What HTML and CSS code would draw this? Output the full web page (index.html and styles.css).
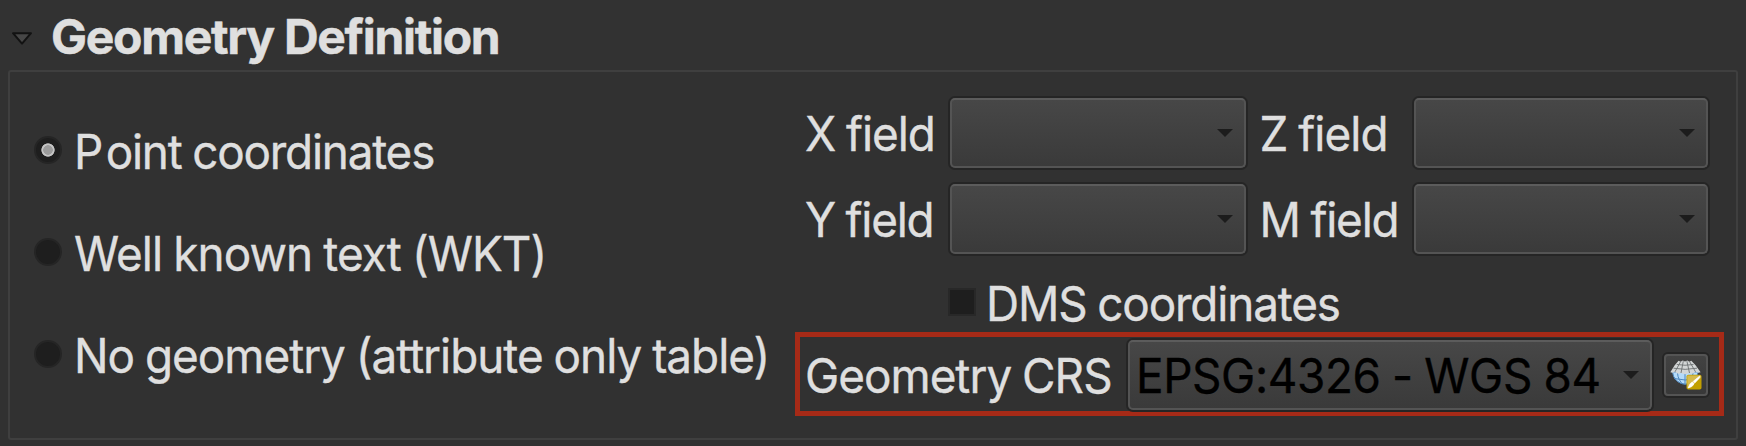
FILE: index.html
```
<!DOCTYPE html>
<html lang="en">
<head>
<meta charset="utf-8">
<title>Geometry Definition</title>
<link rel="stylesheet" href="styles.css">
</head>
<body>
<header class="header">
  <svg class="disclosure" width="24" height="18" viewBox="0 0 24 18"><path d="M3 3.2H21L12 13.6Z" fill="#464646" stroke="#121212" stroke-width="2" stroke-linejoin="round"/></svg>
  <h1 class="title">Geometry Definition</h1>
</header>
<main class="group">
  <div class="radios">
    <label class="radio"><span class="dot dot-on"></span><span class="text t-point"><span class="cap">P</span>oint coordinates</span></label>
    <label class="radio"><span class="dot"></span><span class="text t-wkt">Well known text (WKT)</span></label>
    <label class="radio"><span class="dot"></span><span class="text t-none">No geometry (attribute only table)</span></label>
  </div>
  <div class="fields">
    <div class="grid">
      <span class="text t-x">X field</span>
      <div class="combo"><svg class="arrow" width="16" height="8"><path d="M0 0H16L8 8Z"/></svg></div>
      <span class="text second t-z">Z field</span>
      <div class="combo"><svg class="arrow" width="16" height="8"><path d="M0 0H16L8 8Z"/></svg></div>
      <span class="text t-y">Y field</span>
      <div class="combo"><svg class="arrow" width="16" height="8"><path d="M0 0H16L8 8Z"/></svg></div>
      <span class="text second t-m">M field</span>
      <div class="combo"><svg class="arrow" width="16" height="8"><path d="M0 0H16L8 8Z"/></svg></div>
    </div>
    <label class="dms"><span class="check"></span><span class="text t-dms">DMS coordinates</span></label>
    <div class="crs">
      <span class="text crs-label t-crs">Geometry CRS</span>
      <div class="combo crs-combo"><span class="text t-epsg">EPSG:4326 - WGS 84</span><svg class="arrow" width="16" height="8"><path d="M0 0H16L8 8Z"/></svg></div>
      <div class="button">
        <svg width="32" height="30" viewBox="0 0 32 30">
          <path d="M2.500 12A12.800 13.300 0 0 0 28 12Z" fill="#b4dbfa" stroke="#4d86bd" stroke-width="1"/>
          <path d="M15 12V25M7.500 13Q8 20 13 24.500M23 13Q22.500 20 17.500 24.500M4 18.500Q15 21.500 27 18.500" fill="none" stroke="#4d86bd" stroke-width="1"/>
          <path d="M8.500 .8L10.500 1.800L12.800 .5L15 1.600L17.300 .5L19.500 1.800L21.300 .8L25.800 5.500L30.600 12.300Q28 13.300 25.500 11.800Q22.500 15 19.500 13Q15 15.300 10.800 13Q8 15 5 11.800Q3 13.300 .3 12.300L4.500 5.500Z" fill="#d3d6d6"/>
          <path d="M6.800 4.500Q15 6 23.500 4.500M3.500 8.200Q15 10.500 27 8.200M10.500 1.800L5 11.800M19.700 1.800L25.500 11.800M13.300 1.200L11 13M16.900 1.200L19.500 13" fill="none" stroke="#6c7072" stroke-width=".9"/>
          <rect x="16.500" y="14.700" width="15" height="14.800" rx="1.800" fill="#c29f00"/>
          <path d="M17.300 15.500H30.700V18L18 28H17.300Z" fill="#d5ba4b"/>
          <path d="M29.800 16L23.300 21.200L24.900 22.900L29.800 17.400ZM22.500 21.900Q19.800 22.600 18.200 28Q23 27 24.200 23.600Z" fill="#fff" stroke="#fff" stroke-width=".7"/>
        </svg>
      </div>
    </div>
  </div>
</main>
</body>
</html>
```
FILE: styles.css
```
* { box-sizing: border-box; }
body {
  margin: 0;
  height: 446px;
  overflow: hidden;
  background: #313131;
  color: #dfdfdf;
  font: 400 48px/60px Inter, "Liberation Sans", sans-serif;
  white-space: nowrap;
}
.header {
  display: flex;
  height: 70px;
  padding: 7px 0 0 10px;
  background: #323232;
}
.disclosure { margin: 23px 17px 0 0; }
.title { margin: 0; font-size: 48px; font-weight: 700; line-height: 60px; letter-spacing: -1.3px; -webkit-text-stroke: .5px; }
.group {
  display: flex;
  width: 1730px;
  height: 370px;
  margin-left: 8px;
  padding: 0 12px 0 24px;
  border: 2px solid #3f3f3f;
  border-radius: 3px;
}
.radios { width: 761px; flex: none; padding-top: 28px; }
.radio { display: flex; align-items: center; height: 102px; gap: 12px; }
.dot {
  flex: none;
  width: 28px;
  height: 28px;
  margin-top: -2px;
  border: 2px solid #252525;
  border-radius: 50%;
  background: #1e1e1e;
}
.dot-on { background: radial-gradient(circle, #9c9c9c 0 4.500px, #c4c4c4 5px 6.300px, #1e1e1e 7px); }
.fields { width: 929px; flex: none; padding-top: 24px; }
.grid {
  display: grid;
  grid-template-columns: 143px 300px 164px 298px;
  grid-auto-rows: 74px;
  row-gap: 12px;
  padding-left: 10px;
  line-height: 74px;
}
.text {
  display: block;
  transform: translateY(1px) scaleX(.955);
  transform-origin: left center;
  word-spacing: -1px;
  -webkit-text-stroke: .4px;
}
.second { padding-left: 12px; }
.combo {
  display: flex;
  align-items: flex-start;
  justify-content: flex-end;
  height: 70px;
  margin: 2px;
  padding: 29px 11px 0 0;
  border: 2px solid #545454;
  border-top-color: #5c5c5c;
  border-radius: 5px;
  background: linear-gradient(#474747, #3a3a3a);
  box-shadow: 0 0 0 2px #252525;
}
.arrow { display: block; flex: none; fill: #1c1c1c; }
.dms { display: flex; align-items: center; height: 76px; padding: 18px 0 0 153px; gap: 10px; }
.check { width: 28px; height: 28px; margin-top: -2px; border: 2px solid #282828; background: #1e1e1e; }
.crs {
  display: flex;
  height: 84px;
  padding: 3px 0 0 5px;
  border: 5px solid #a62a17;
  line-height: 70px;
}
.crs-label { width: 323px; flex: none; }
.crs-combo { width: 524px; flex: none; margin: 0; padding-left: 6px; justify-content: space-between; color: #000; }
.crs-combo .text { margin-top: -31px; }
.button {
  display: flex;
  flex: none;
  align-items: center;
  justify-content: center;
  width: 44px;
  height: 42px;
  margin: 14px 0 0 12px;
  border: 2px solid #545454;
  border-radius: 4px;
  background: linear-gradient(#424242, #383838);
  box-shadow: 0 0 0 2px #252525;
}
.t-point { letter-spacing: -1.26px; }
.cap { letter-spacing: 2.500px; }
.t-wkt { letter-spacing: -.94px; }
.t-none { letter-spacing: -1.05px; }
.t-x { letter-spacing: -1.1px; }
.t-y { letter-spacing: -1.3px; }
.t-z { letter-spacing: -1px; }
.t-m { letter-spacing: -1.25px; }
.t-dms { letter-spacing: -1.2px; }
.t-crs { letter-spacing: -1.03px; }
.t-epsg { letter-spacing: -.4px; }
```
